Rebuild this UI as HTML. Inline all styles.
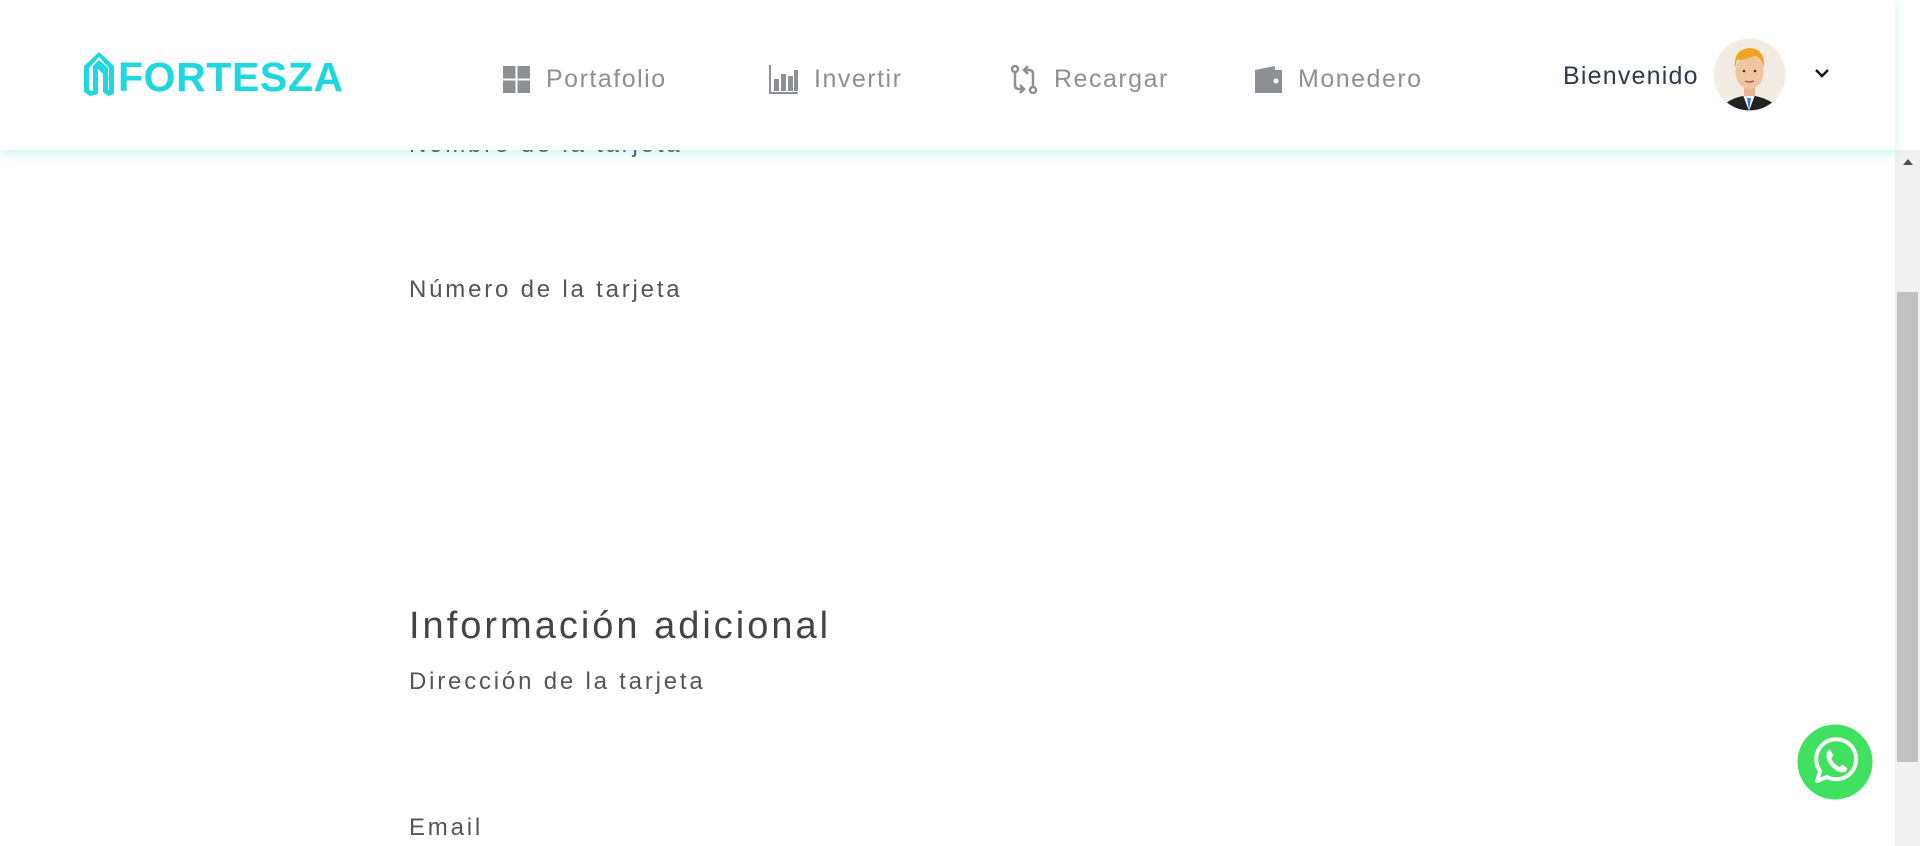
<!DOCTYPE html>
<html style="overflow:hidden;height:846px"><head><meta charset="utf-8"><style>
*{margin:0;padding:0;box-sizing:border-box}
body{width:1920px;height:846px;overflow:hidden;background:#fff;font-family:"Liberation Sans",sans-serif;position:relative}
.hdr{position:absolute;left:0;top:0;width:1895px;height:150px;background:#fff;box-shadow:0 3px 10px rgba(30,215,225,.25);z-index:5}
.nav{position:absolute;top:65px;font-size:25px;color:#8e8f95;letter-spacing:1.5px;display:flex;align-items:center}
.nav svg{margin-right:16px}
.lbl{position:absolute;left:409px;font-size:24px;color:#555;letter-spacing:2.8px}
.sb{position:absolute;right:0;top:150px;width:25px;height:696px;background:#f1f1f1}
.th{position:absolute;right:2px;top:142px;width:21px;height:470px;background:#c1c1c1}
</style></head><body>
<div class="lbl" style="top:131px">Nombre de la tarjeta</div>
<div class="hdr">
 <svg style="position:absolute;left:84px;top:52px" width="30" height="44" viewBox="0 0 30 44"><path d="M0 14 L15 0 L30 14 V42 L24 44 L19 40 V22 L14 17 V42 L6 44 L0 40Z M5 16 V38 L9 39 V14 L15 8 L24 16 V38 L25 38 V16 L15 5Z" fill="#1ed7df" fill-rule="evenodd"/></svg>
 <div style="position:absolute;left:118px;top:55px;font-size:41px;font-weight:bold;color:#1ed7df;letter-spacing:0.6px;line-height:44px">FORTESZA</div>
 <div class="nav" style="left:503px"><svg width="27" height="27"><rect x="0" y="0" width="12.5" height="12.5" fill="#8e8f95"/><rect x="14.5" y="0" width="12.5" height="12.5" fill="#8e8f95"/><rect x="0" y="14.5" width="12.5" height="12.5" fill="#8e8f95"/><rect x="14.5" y="14.5" width="12.5" height="12.5" fill="#8e8f95"/></svg>Portafolio</div>
 <div class="nav" style="left:769px"><svg width="29" height="29"><path d="M1 0V28H29" stroke="#8e8f95" stroke-width="2" fill="none"/><rect x="5" y="14" width="5" height="12" fill="#8e8f95"/><rect x="12" y="9" width="5" height="17" fill="#8e8f95"/><rect x="19" y="11" width="5" height="15" fill="#8e8f95"/><rect x="25" y="5" width="4" height="21" fill="#8e8f95"/></svg>Invertir</div>
 <div class="nav" style="left:1010px"><svg width="28" height="29" viewBox="0 0 28 29" fill="none" stroke="#8e8f95" stroke-width="2.5"><circle cx="5" cy="4" r="3"/><circle cx="23" cy="25" r="3"/><path d="M5 7V20Q5 24 9 24H13M10 20L14 24L10 28"/><path d="M23 22V9Q23 5 19 5H15M18 1L14 5L18 9"/></svg>Recargar</div>
 <div class="nav" style="left:1255px"><svg width="27" height="27"><path d="M0 4L20 0V4H27V27H0Z" fill="#8e8f95"/><circle cx="21" cy="15" r="2.5" fill="#fff"/></svg>Monedero</div>
 <div style="position:absolute;left:1563px;top:62px;font-size:25px;color:#2f3a4a;letter-spacing:1.2px">Bienvenido</div>
 <svg style="position:absolute;left:1713px;top:38px" width="73" height="73" viewBox="0 0 73 73"><defs><clipPath id="c"><ellipse cx="36.5" cy="36.5" rx="36" ry="36"/></clipPath></defs><g clip-path="url(#c)"><rect width="73" height="73" fill="#f3ece3"/><path d="M8 73Q12 60 36 57Q60 60 66 73Z" fill="#222"/><path d="M30 57L36 73L42 57Z" fill="#fff"/><path d="M34 60L36 73L38 60Z" fill="#2b7fe0"/><rect x="31" y="44" width="11" height="14" fill="#e8b68f"/><ellipse cx="36.5" cy="34" rx="14" ry="17" fill="#f0c49e"/><path d="M22 30Q20 12 36 10Q52 10 51 30Q48 20 42 18Q32 22 24 22Z" fill="#f0a424"/><circle cx="31" cy="33" r="1.3" fill="#333"/><circle cx="42" cy="33" r="1.3" fill="#333"/><path d="M32 43Q36 45 41 43" stroke="#a55" stroke-width="1.5" fill="none"/></g></svg>
 <svg style="position:absolute;left:1814px;top:68px" width="16" height="11"><path d="M2 2L8 8L14 2" stroke="#111" stroke-width="2.5" fill="none"/></svg>
</div>
<div class="lbl" style="top:276px">Número de la tarjeta</div>
<div style="position:absolute;left:409px;top:605px;font-size:38px;color:#444;letter-spacing:3px">Información adicional</div>
<div class="lbl" style="top:668px">Dirección de la tarjeta</div>
<div class="lbl" style="top:814px">Email</div>
<div class="sb"><div class="th"></div><svg style="position:absolute;left:8px;top:8px" width="10" height="7"><path d="M0 7L5 1L10 7Z" fill="#505050"/></svg></div>
<svg style="position:absolute;left:1797px;top:724px" width="76" height="76" viewBox="0 0 76 76"><circle cx="38" cy="38" r="37.5" fill="#40e060"/><path d="M20 57L23 47A20 20 0 1 1 30 53Z" fill="none" stroke="#fff" stroke-width="4" stroke-linejoin="round"/><path d="M30 28Q32 24 34 27L36 31Q36 33 34 34Q37 41 43 43Q44 41 46 41L50 44Q51 46 48 48Q42 50 35 43Q28 36 30 28Z" fill="#fff"/></svg>
</body></html>
